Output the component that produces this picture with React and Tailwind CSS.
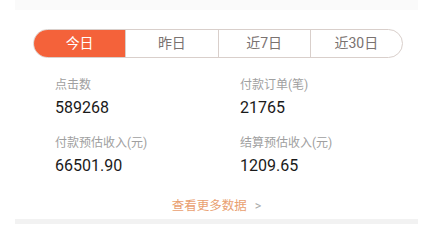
const tabs = ["今日", "昨日", "近7日", "近30日"];

const stats = [
  { label: "点击数", value: "589268" },
  { label: "付款订单(笔)", value: "21765" },
  { label: "付款预估收入(元)", value: "66501.90" },
  { label: "结算预估收入(元)", value: "1209.65" },
];

export default function App() {
  return (
    <div
      className="w-[433px] h-[224px] bg-white overflow-hidden"
      style={{ fontFamily: "Roboto, 'Noto Sans CJK SC', sans-serif" }}
    >
      <div className="mx-[15px] h-[10px] bg-[#fafafa]" />
      <div className="mx-[15px] pt-[19px]">
        <div className="ml-[18px] w-[370px] h-[29px] flex rounded-full border border-[#d9cfcb] overflow-hidden">
          {tabs.map((t, i) => (
            <div
              key={t}
              className={
                i === 0
                  ? "flex-1 flex items-center justify-center text-[14px] text-white bg-[#f4623a]"
                  : "flex-1 flex items-center justify-center text-[14px] text-[#7a7270] border-l border-[#d9cfcb]"
              }
            >
              {t}
            </div>
          ))}
        </div>

        <div className="grid grid-cols-[185px_1fr] pl-[40px] pt-[18px] gap-y-[15px]">
          {stats.map((s) => (
            <div key={s.label} className="flex flex-col gap-[3px]">
              <div className="text-[12px] leading-[18px] text-[#a0a0a0]">{s.label}</div>
              <div className="text-[16px] leading-[22px] text-[#1a1a1a]">{s.value}</div>
            </div>
          ))}
        </div>

        <div className="mt-[20px] h-[18px] flex items-center justify-center gap-[8px] text-[12.5px] leading-[18px]">
          <span className="text-[#e9a070]">查看更多数据</span>
          <span className="text-[#aaa]">&gt;</span>
        </div>
      </div>
      <div className="mx-[15px] mt-[4px] h-[6px] bg-[#f2f2f2]" />
    </div>
  );
}
